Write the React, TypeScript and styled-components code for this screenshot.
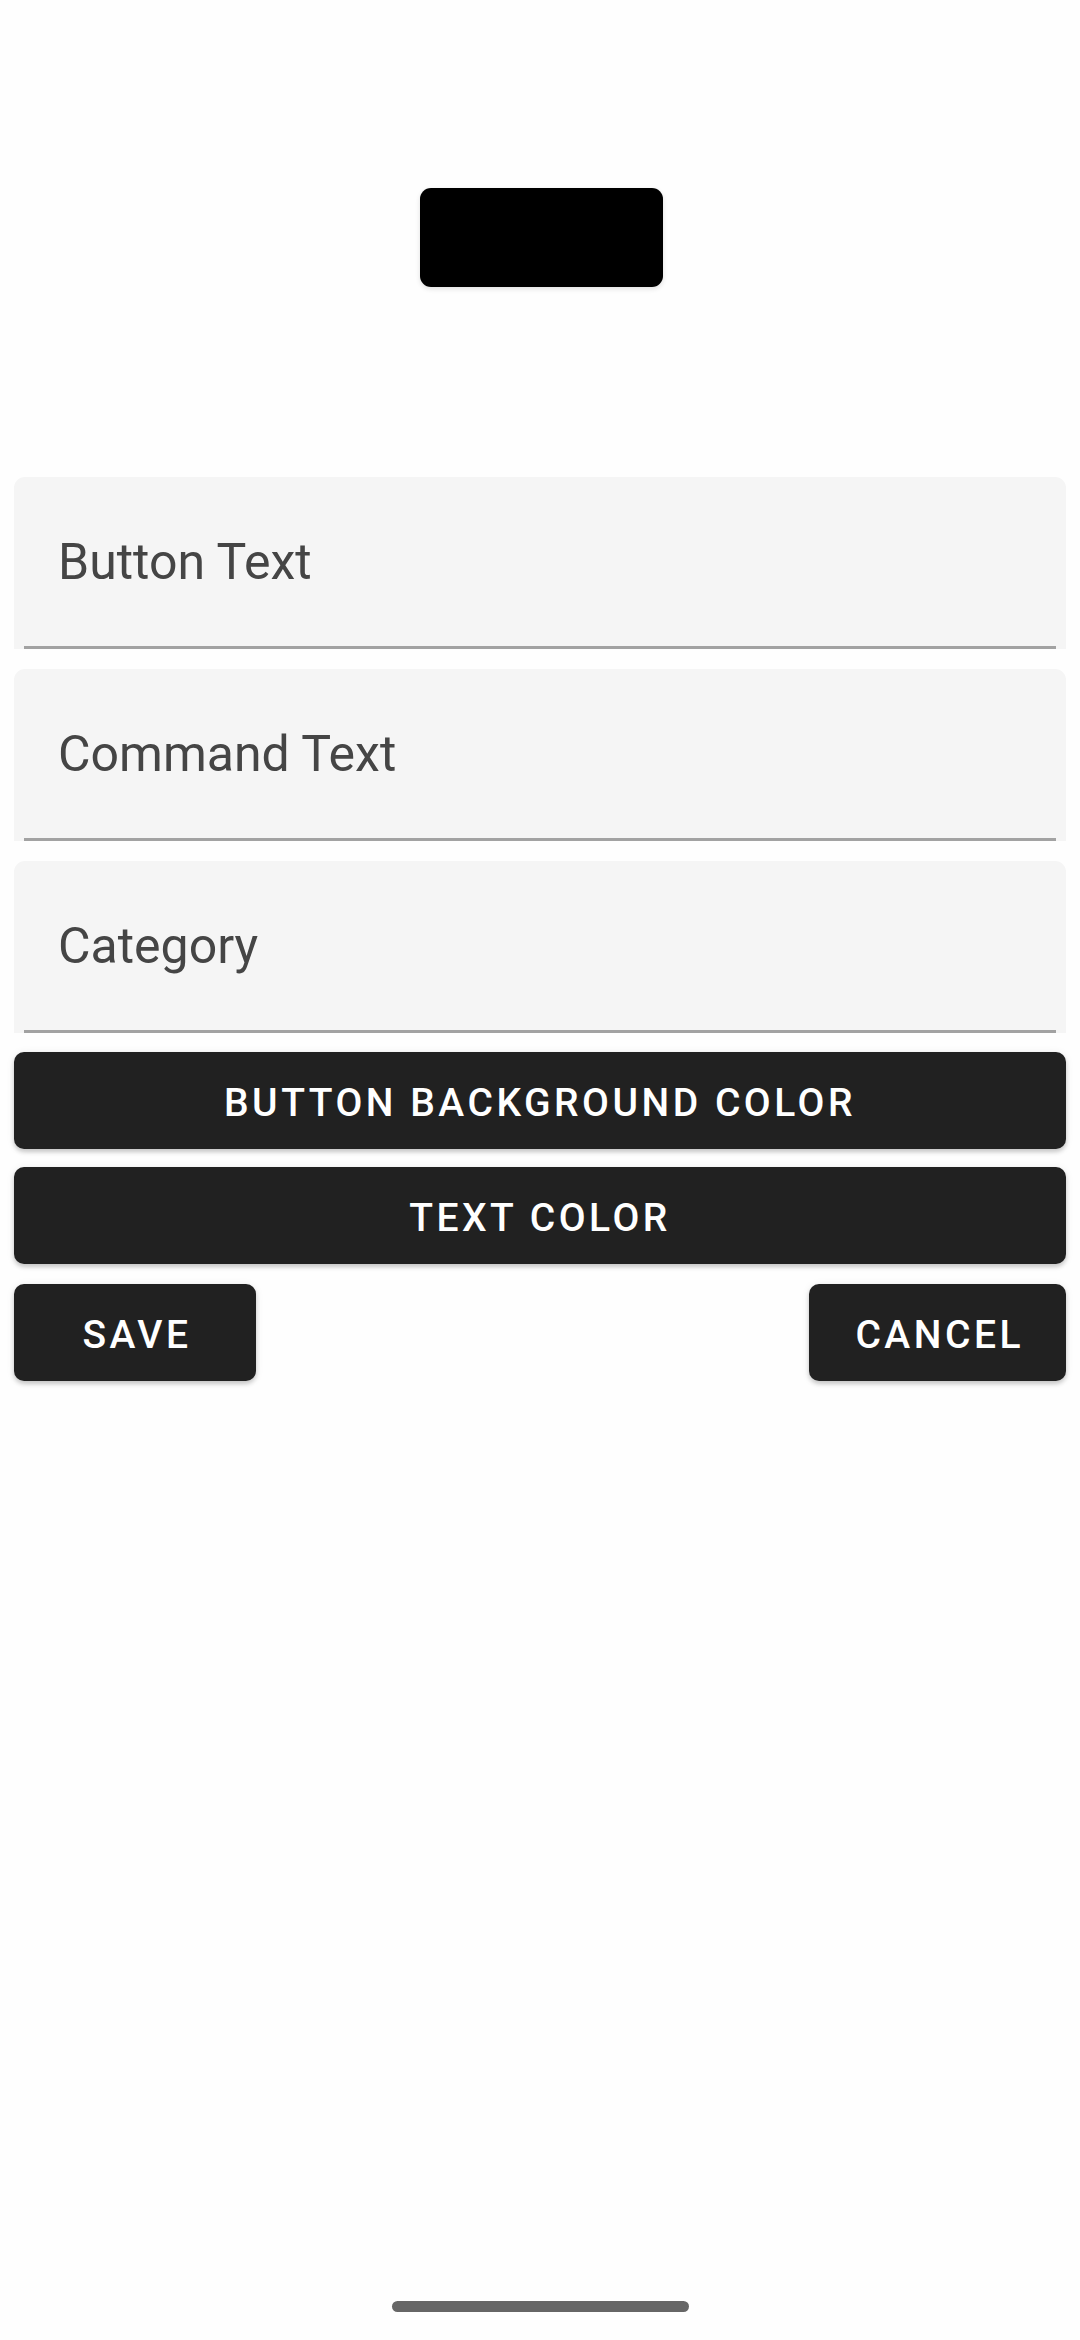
import { FC } from "react";
import { createGlobalStyle, styled } from "styled-components";

const colors = {
  page: "#fefefe",
  field: "#f5f5f5",
  underline: "#a2a2a2",
  hint: "#454545",
  button: "#212121",
  white: "#ffffff",
  indicator: "#666666",
};

const GlobalStyle = createGlobalStyle`
  html, body {
    margin: 0;
    padding: 0;
    background: ${colors.page};
    font-family: Roboto, "Noto Sans", "Liberation Sans", sans-serif;
  }
  * {
    box-sizing: border-box;
  }
`;

const fields = ["Button Text", "Command Text", "Category"];

const TextField: FC<{ hint: string }> = ({ hint }) => (
  <Field>
    <Hint>{hint}</Hint>
    <Underline />
  </Field>
);

const App: FC = () => {
  return (
    <>
      <GlobalStyle />
      <Screen>
        <PreviewRow>
          <Preview />
        </PreviewRow>
        <Form>
          <FieldList>
            {fields.map((el) => (
              <TextField hint={el} key={el} />
            ))}
          </FieldList>
          <WideButton>Button Background Color</WideButton>
          <WideButton>Text Color</WideButton>
          <ActionRow>
            <ActionButton>Save</ActionButton>
            <ActionButton>Cancel</ActionButton>
          </ActionRow>
        </Form>
        <HomeIndicator />
      </Screen>
    </>
  );
};
export default App;

const Screen = styled.div`
  display: flex;
  flex-direction: column;
  min-height: 2340px;
  padding: 188px 14px 28px;
`;
const PreviewRow = styled.div`
  display: flex;
  justify-content: center;
  padding-left: 2px;
`;
const Preview = styled.div`
  width: 243px;
  height: 99px;
  background: #000;
  border-radius: 11px;
  box-shadow: 0 2px 5px rgba(0, 0, 0, 0.12);
`;
const Form = styled.div`
  display: flex;
  flex-direction: column;
  row-gap: 18px;
  margin-top: 190px;
`;
const FieldList = styled.div`
  display: flex;
  flex-direction: column;
  row-gap: 20px;
  margin-bottom: 1px;
`;
const Field = styled.div`
  position: relative;
  display: flex;
  align-items: center;
  height: 172px;
  padding: 0 44px 2px;
  background: ${colors.field};
  border-radius: 11px 11px 0 0;
`;
const Hint = styled.span`
  font-size: 50px;
  line-height: 1;
  color: ${colors.hint};
`;
const Underline = styled.div`
  position: absolute;
  left: 10px;
  right: 10px;
  bottom: 0;
  height: 3px;
  background: ${colors.underline};
`;
const BaseButton = styled.button`
  display: flex;
  align-items: center;
  justify-content: center;
  height: 97px;
  padding-top: 5px;
  border: none;
  border-radius: 10px;
  background: ${colors.button};
  color: ${colors.white};
  font-family: Roboto, "Noto Sans", "Liberation Sans", sans-serif;
  font-size: 39px;
  font-weight: 500;
  letter-spacing: 0.09em;
  text-transform: uppercase;
  box-shadow: 0 3px 4px rgba(0, 0, 0, 0.18), 0 1px 8px rgba(0, 0, 0, 0.08);
`;
const WideButton = styled(BaseButton)`
  width: 100%;
`;
const ActionRow = styled.div`
  display: flex;
  justify-content: space-between;
  margin-top: 2px;
`;
const ActionButton = styled(BaseButton)`
  min-width: 242px;
  padding: 5px 42px 0 46px;
`;
const HomeIndicator = styled.div`
  align-self: center;
  width: 297px;
  height: 11px;
  margin-top: auto;
  border-radius: 6px;
  background: ${colors.indicator};
`;
